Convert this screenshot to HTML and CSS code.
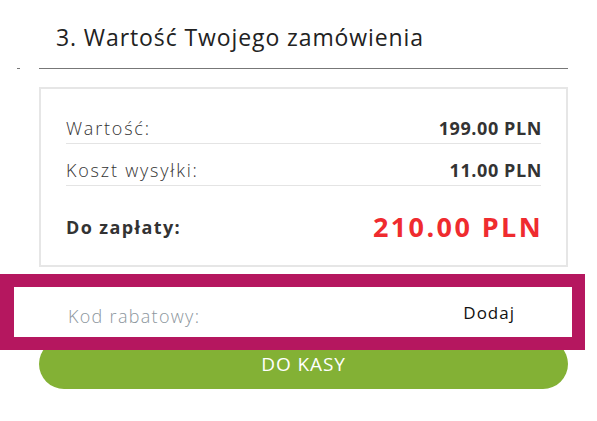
FILE: index.html
```html
<!DOCTYPE html>
<html lang="pl">
<head>
    <meta charset="UTF-8">
    <meta name="viewport" content="width=device-width, initial-scale=1.0">
    <title>Podsumowanie zamówienia</title>
    <link rel="stylesheet" href="styles.css">
</head>
<body>

    <main class="order">
        <h2 class="order-title">3. Wartość Twojego zamówienia</h2>
        <div class="order-rule">
            <span class="rule-mark"></span>
            <span class="rule-line"></span>
        </div>

        <div class="totals">
            <div class="totals-row">
                <span>Wartość:</span>
                <strong>199.00 PLN</strong>
            </div>
            <div class="totals-row">
                <span>Koszt wysyłki:</span>
                <strong>11.00 PLN</strong>
            </div>
            <div class="totals-row totals-sum">
                <span>Do zapłaty:</span>
                <strong>210.00 PLN</strong>
            </div>
        </div>

        <div class="coupon">
            <span class="coupon-label">Kod rabatowy:</span>
            <a href="#" class="coupon-add">Dodaj</a>
        </div>

        <button type="button" class="checkout">DO KASY</button>
    </main>

</body>
</html>
```

FILE: styles.css
```css
body {
    margin: 0;
    background: #fff;
    font-family: "Open Sans", Arial, sans-serif;
    color: #333;
}
.order {
    width: 585px;
    padding-top: 22px;
}
.order-title {
    margin: 0 0 0 56px;
    font-size: 23px;
    line-height: 30px;
    letter-spacing: 0.9px;
    font-weight: 400;
    color: #222;
}
.order-rule {
    display: flex;
    align-items: center;
    gap: 19px;
    padding-left: 17px;
    margin-top: 16px;
    width: 551px;
}
.rule-mark {
    width: 3px;
    height: 1px;
    background: #777;
}
.rule-line {
    flex: 1;
    height: 1px;
    background: #777;
}
.totals {
    margin: 18px 0 0 39px;
    width: 529px;
    box-sizing: border-box;
    border: 2px solid #e6e6e6;
    padding: 13px 25px 19px 25px;
}
.totals-row {
    display: flex;
    justify-content: space-between;
    padding: 14px 0 3px;
    line-height: 24px;
    font-size: 18px;
    font-weight: 300;
    letter-spacing: 1.8px;
    border-bottom: 1px solid #e4e4e4;
}
.totals-row strong {
    margin-right: -1px;
    font-weight: 700;
    letter-spacing: 0.6px;
    color: #333;
}
.totals-sum {
    border-bottom: none;
    align-items: flex-start;
    padding-top: 24px;
}
.totals-sum span {
    margin-top: 5px;
    font-weight: 700;
    letter-spacing: 1.4px;
}
.totals-sum strong {
    margin: 1px -2px 0 0;
    font-size: 27px;
    line-height: 32px;
    letter-spacing: 2.4px;
    color: #ef2b2f;
}
.coupon {
    position: relative;
    z-index: 1;
    display: flex;
    justify-content: space-between;
    align-items: center;
    box-sizing: border-box;
    width: 585px;
    height: 76px;
    margin-top: 7px;
    padding: 0 57px 0 54px;
    background: #fff;
    border: 13px solid #b5175f;
    border-left-width: 14px;
}
.coupon-label {
    font-size: 18px;
    font-weight: 300;
    letter-spacing: 1.3px;
    color: #8c969d;
    margin-top: 8px;
}
.coupon-add {
    font-size: 17px;
    letter-spacing: 1px;
    color: #111;
    text-decoration: none;
}
.checkout {
    display: block;
    margin: -11px 0 0 39px;
    width: 529px;
    height: 50px;
    border: none;
    border-radius: 25px;
    background: #83b135;
    color: #fff;
    font-family: inherit;
    font-size: 19px;
    letter-spacing: 0.9px;
    cursor: pointer;
}
```
